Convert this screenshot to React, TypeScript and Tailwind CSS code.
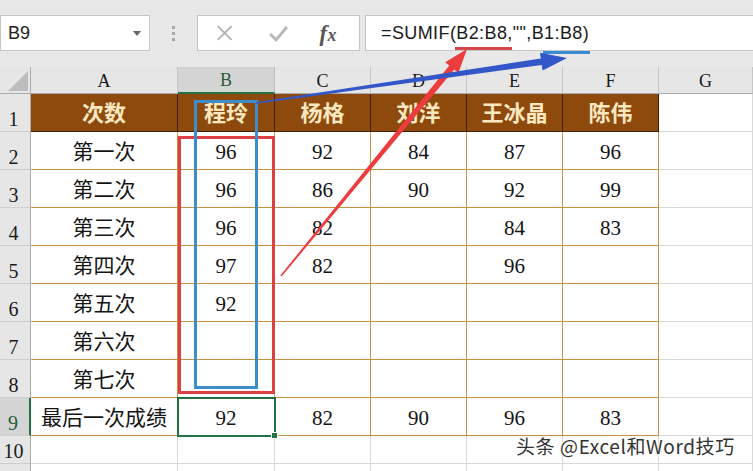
import React from 'react';

const data: string[][] = [
  ['次数', '程玲', '杨格', '刘洋', '王冰晶', '陈伟'],
  ['第一次', '96', '92', '84', '87', '96'],
  ['第二次', '96', '86', '90', '92', '99'],
  ['第三次', '96', '82', '', '84', '83'],
  ['第四次', '97', '82', '', '96', ''],
  ['第五次', '92', '', '', '', ''],
  ['第六次', '', '', '', '', ''],
  ['第七次', '', '', '', '', ''],
  ['最后一次成绩', '92', '82', '90', '96', '83'],
];

const letters = ['A', 'B', 'C', 'D', 'E', 'F', 'G'];

function arrow(x1: number, y1: number, x2: number, y2: number, w0: number, w1: number, hl: number, hw: number) {
  const dx = x2 - x1;
  const dy = y2 - y1;
  const len = Math.hypot(dx, dy);
  const ux = dx / len;
  const uy = dy / len;
  const nx = -uy;
  const ny = ux;
  const bx = x2 - ux * hl;
  const by = y2 - uy * hl;
  const pts: [number, number][] = [
    [x1 + nx * w0, y1 + ny * w0],
    [bx + nx * w1, by + ny * w1],
    [bx + nx * hw, by + ny * hw],
    [x2, y2],
    [bx - nx * hw, by - ny * hw],
    [bx - nx * w1, by - ny * w1],
    [x1 - nx * w0, y1 - ny * w0],
  ];
  return pts.map((p) => `${p[0].toFixed(1)},${p[1].toFixed(1)}`).join(' ');
}

function ColHeader({ letter }: { letter: string }) {
  if (letter === 'B') {
    return (
      <div className="flex items-center justify-center bg-[#d4d4d4] border-r border-r-[#bdbdbd] border-b-2 border-b-[#217346] text-[18px] text-[#2a5a3b] pt-[2px]">
        {letter}
      </div>
    );
  }
  return (
    <div className="flex items-center justify-center bg-[#e6e6e6] border-r border-r-[#c6c6c6] border-b border-b-[#ababab] text-[18px] text-[#1a1a1a] pt-[2px]">
      {letter}
    </div>
  );
}

function RowHeader({ n }: { n: number | null }) {
  if (n === 9) {
    return (
      <div className="flex items-end justify-center pr-[3px] pb-[2px] bg-[#d4d4d4] border-r-2 border-r-[#217346] border-b border-b-[#cfcfcf] text-[20px] text-[#2a5a3b] leading-none">
        {n}
      </div>
    );
  }
  return (
    <div className="flex items-end justify-center pr-[3px] pb-[2px] bg-[#e6e6e6] border-r border-r-[#ababab] border-b border-b-[#cfcfcf] text-[20px] text-[#1a1a1a] leading-none">
      {n}
    </div>
  );
}

function Cell({ r, text }: { r: number; text: string }) {
  if (r === 0) {
    return (
      <div className="flex items-center justify-center pt-[1px] bg-[#8e4a0c] border-r border-b border-[#3e1d05] text-[22px] font-bold text-[#fbe7c0]">
        {text}
      </div>
    );
  }
  return (
    <div className="flex items-center justify-center pt-[4px] bg-white border-r border-b border-[#c8923f] text-[21px] text-[#141414]">
      {text}
    </div>
  );
}

function Blank() {
  return <div className="bg-white border-r border-b border-[#d9d9d9]" />;
}

export default function App() {
  return (
    <div className="relative w-[753px] h-[471px] overflow-hidden bg-[#e8e8e8] font-['Liberation_Serif','Noto_Sans_CJK_SC',serif]">
      {/* formula bar */}
      <div className="flex items-start h-[67px] pt-[15px] font-['Liberation_Sans','Noto_Sans_CJK_SC',sans-serif]">
        <div className="relative flex items-center w-[150px] h-[36px] bg-white border border-[#c6c6c6] pl-[7px] text-[18px] text-[#222]">
          B9
          <span className="absolute left-[132px] top-[15px] w-0 h-0 border-l-[4px] border-r-[4px] border-t-[5px] border-l-transparent border-r-transparent border-t-[#666]" />
        </div>
        <div className="flex flex-col items-center justify-center gap-[3px] w-[47px] h-[36px]">
          <span className="w-[3px] h-[3px] bg-[#a8a8a8]" />
          <span className="w-[3px] h-[3px] bg-[#a8a8a8]" />
          <span className="w-[3px] h-[3px] bg-[#a8a8a8]" />
        </div>
        <div className="flex items-center w-[163px] h-[36px] bg-white border border-[#c6c6c6]">
          <svg width="163" height="34" viewBox="0 0 163 34">
            <path d="M20 10 L34 24 M34 10 L20 24" stroke="#b4b4b4" strokeWidth="2" fill="none" />
            <path d="M73 18 L79 24 L90 11" stroke="#b8b8b8" strokeWidth="3" fill="none" />
            <text x="123" y="25" fontFamily="Liberation Serif, serif" fontStyle="italic" fontWeight="bold" fontSize="23" fill="#555">f</text>
            <text x="131" y="25" fontFamily="Liberation Serif, serif" fontStyle="italic" fontWeight="bold" fontSize="18" fill="#555">x</text>
          </svg>
        </div>
        <div className="flex items-center flex-1 h-[36px] ml-[5px] bg-white border-y border-l border-[#c6c6c6] pl-[15px] text-[18px] tracking-[0.4px] text-[#1a1a1a]">
          =SUMIF(B2:B8,"",B1:B8)
        </div>
      </div>

      {/* sheet */}
      <div className="grid grid-cols-[31px_147px_97px_96px_96px_96px_96px_94px] grid-rows-[27px_38px_38px_38px_38px_38px_38px_38px_38px_38px_28px_28px]">
        <div className="relative bg-[#e6e6e6] border-r border-r-[#ababab] border-b border-b-[#ababab]">
          <svg className="absolute left-[7px] top-[3px]" width="22" height="22" viewBox="0 0 22 22">
            <polygon points="21,1 21,21 1,21" fill="#bdbdbd" />
          </svg>
        </div>
        {letters.map((l) => (
          <ColHeader key={l} letter={l} />
        ))}
        {data.map((row, r) => (
          <React.Fragment key={r}>
            <RowHeader n={r + 1} />
            {row.map((t, c) => (
              <Cell key={c} r={r} text={t} />
            ))}
            <Blank />
          </React.Fragment>
        ))}
        {[10, null].map((n, i) => (
          <React.Fragment key={i}>
            <RowHeader n={n} />
            <Blank />
            <Blank />
            <Blank />
            <Blank />
            <Blank />
            <Blank />
            <Blank />
          </React.Fragment>
        ))}
      </div>

      {/* selected cell B9 */}
      <div className="absolute left-[177px] top-[397px] w-[99px] h-[40px] border-2 border-[#217346]" />
      <div className="absolute left-[271px] top-[432px] w-[7px] h-[7px] bg-[#217346] border border-white" />

      {/* annotations */}
      <svg className="absolute left-0 top-0 pointer-events-none" width="753" height="471" viewBox="0 0 753 471">
        <rect x="179.5" y="137.5" width="94" height="255" fill="none" stroke="#dd3f45" strokeWidth="3" />
        <rect x="195.5" y="101.5" width="61" height="286" fill="none" stroke="#3d8ccc" strokeWidth="3" />
        <rect x="455" y="47" width="57" height="3" fill="#d4474a" />
        <rect x="543" y="51" width="47" height="3" fill="#3a8ad4" />
        <polygon points={arrow(281, 276, 467, 49, 0.8, 3.2, 24, 8.5)} fill="#ec3c3e" />
        <polygon points={arrow(256, 103, 567, 58, 0.8, 3.2, 26, 9)} fill="#3356c9" />
      </svg>

      {/* watermark */}
      <div className="absolute left-[516px] top-[436px] text-[19px] leading-none tracking-[0.6px] text-[#333] font-['Noto_Sans_CJK_SC',sans-serif] [text-shadow:0_0_2px_#fff,0_0_2px_#fff]">
        头条 @Excel和Word技巧
      </div>
    </div>
  );
}
